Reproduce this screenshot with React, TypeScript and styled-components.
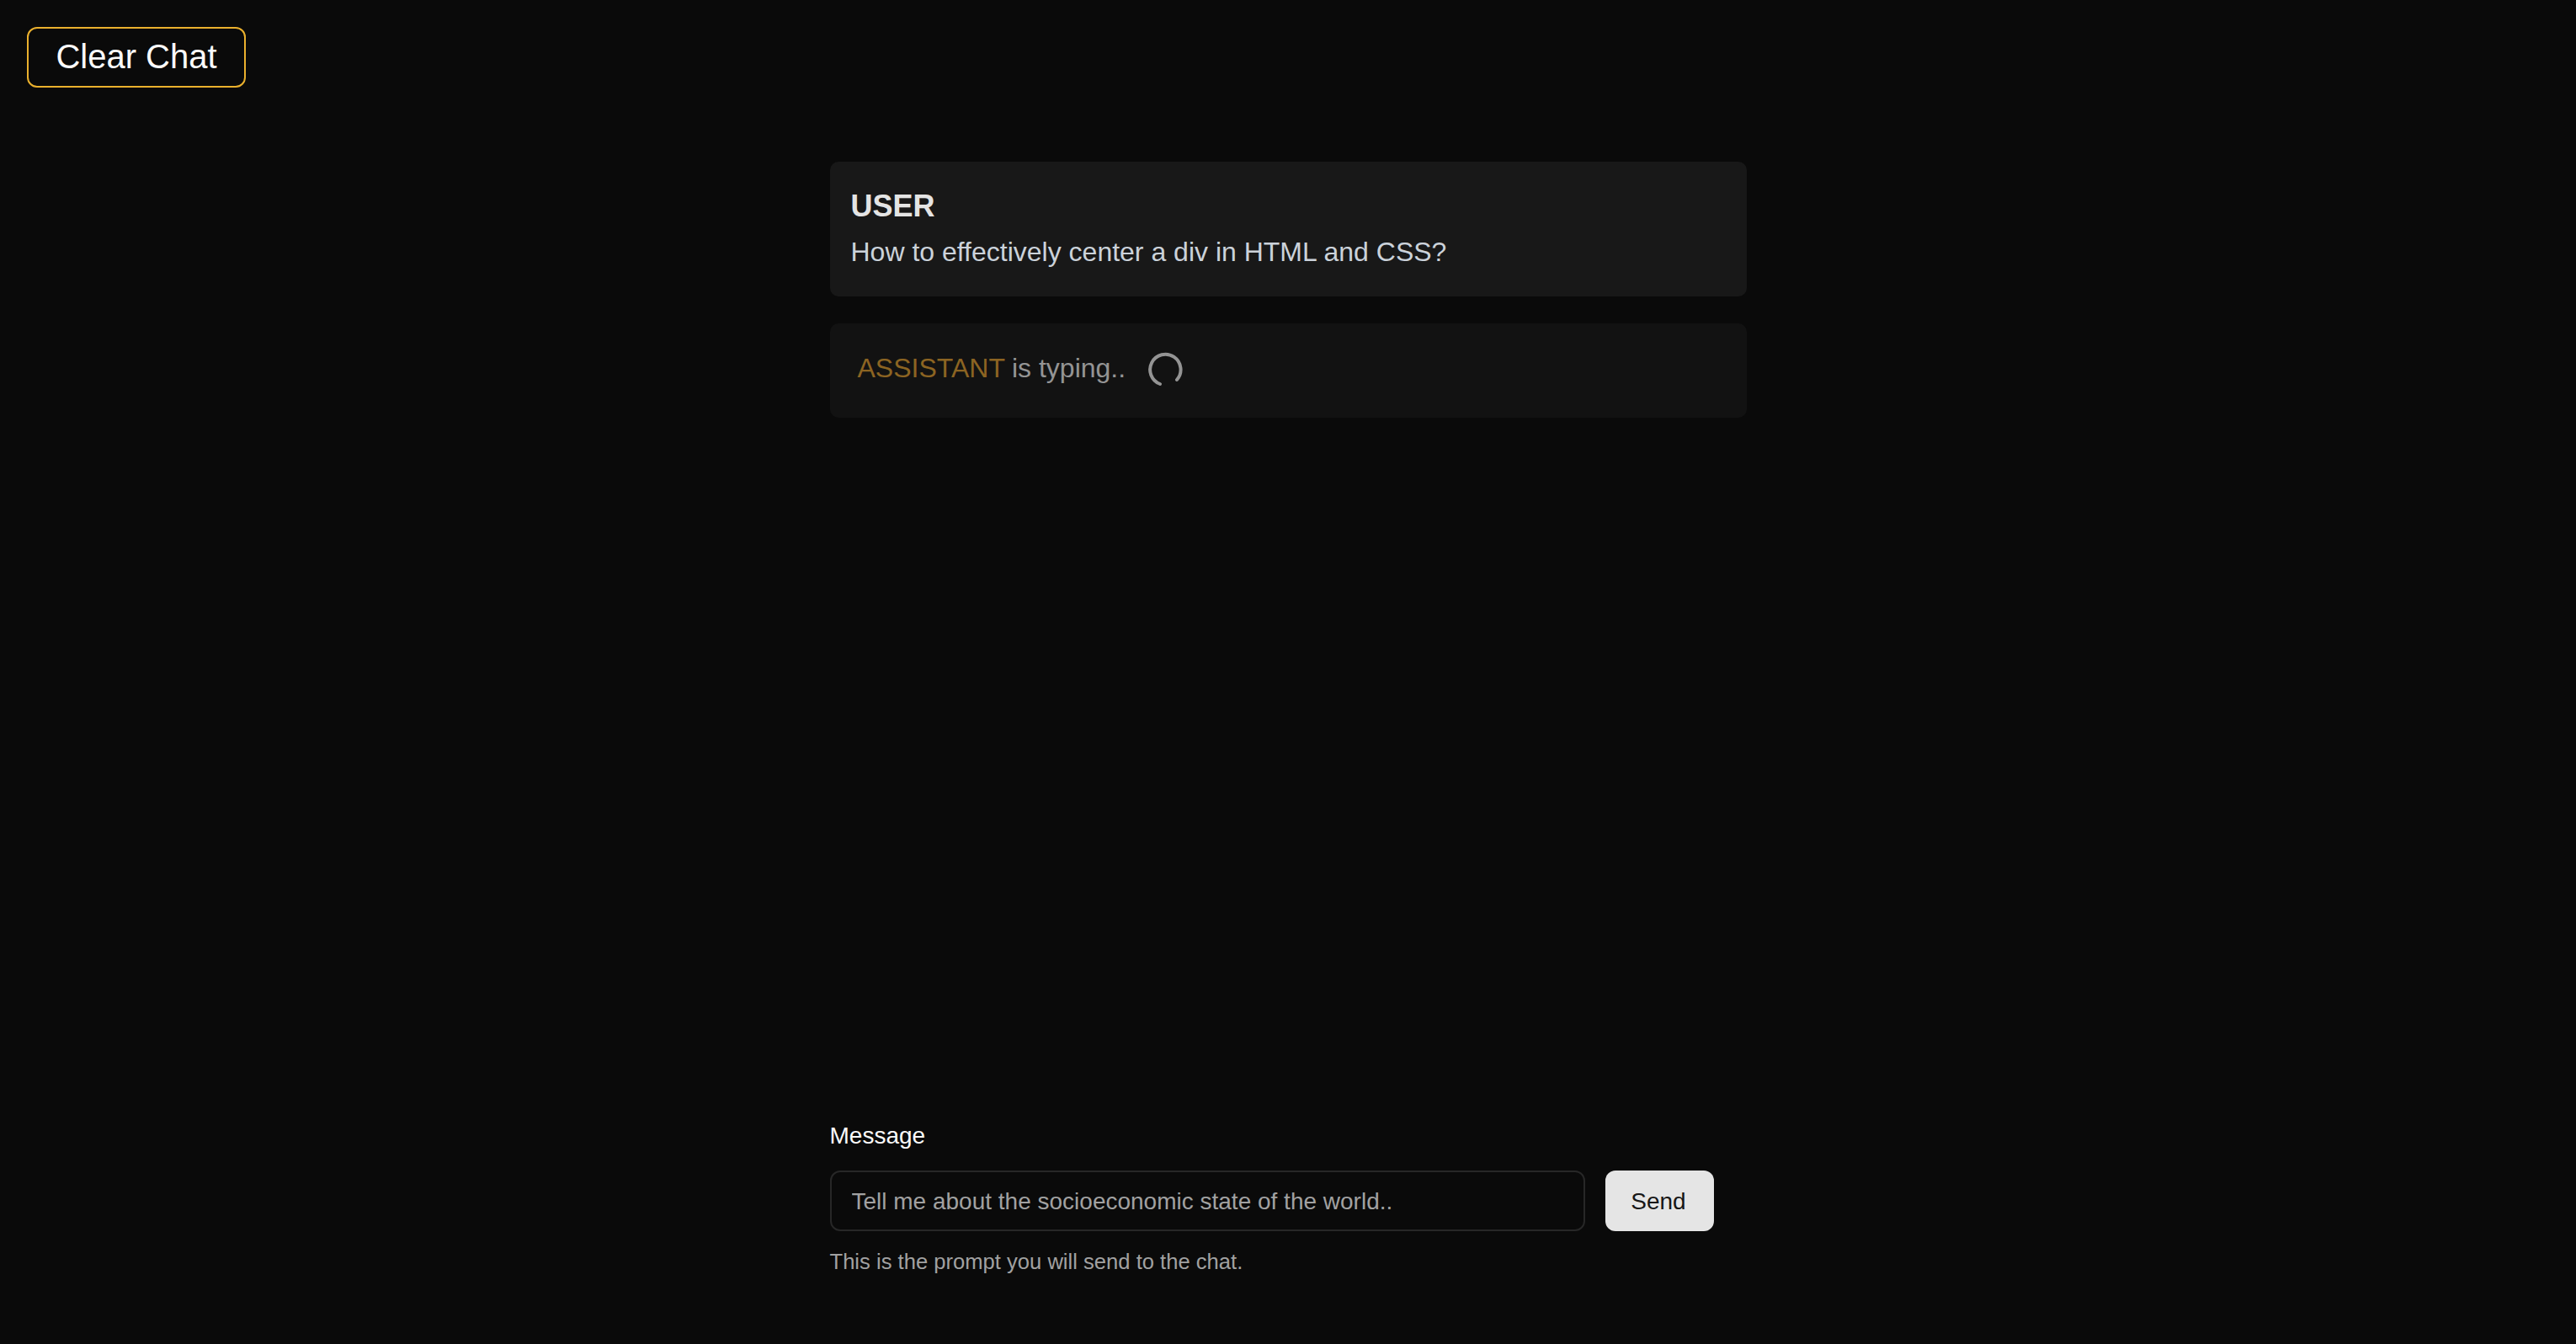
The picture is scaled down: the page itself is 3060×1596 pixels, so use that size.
import { createGlobalStyle, styled } from 'styled-components'

const GlobalStyle = createGlobalStyle`
  html, body {
    margin: 0;
    height: 100%;
    background: #0a0a0a;
    font-family: 'Liberation Sans', Arial, sans-serif;
  }
`

const Page = styled.div`
  height: 1596px;
  box-sizing: border-box;
  padding: 32px 0 0;
  display: flex;
  flex-direction: column;
  overflow: hidden;
`

const Toolbar = styled.div`
  padding-left: 32px;
  display: flex;
`

const ClearButton = styled.button`
  width: 260px;
  height: 72px;
  padding: 0 0 2px;
  border: 2px solid #eab02d;
  border-radius: 12px;
  background: transparent;
  color: #fafafa;
  font: 400 40px 'Liberation Sans', Arial, sans-serif;
`

const Column = styled.main`
  width: 1089px;
  margin: 88px auto 0;
  flex: 1;
  display: flex;
  flex-direction: column;
`

const MessageCard = styled.div`
  height: 160px;
  box-sizing: border-box;
  padding: 30px 25px 0;
  background: #181818;
  border-radius: 10px;
`

const Role = styled.div`
  color: #e4e4e4;
  font-size: 36px;
  font-weight: 700;
  line-height: 46px;
`

const MessageText = styled.div`
  color: #cbd2da;
  font-size: 32px;
  line-height: 46px;
  margin-top: 8px;
`

const TypingCard = styled.div`
  height: 112px;
  box-sizing: border-box;
  margin-top: 32px;
  padding: 0 33px 5px;
  background: #121212;
  border-radius: 10px;
  display: flex;
  align-items: center;
  color: #949494;
  font-size: 32px;
`

const AssistantName = styled.span`
  color: #8c6422;
  margin-right: 8px;
`

const Spinner = styled.svg`
  width: 42px;
  height: 42px;
  margin-left: 26px;
  margin-top: 3px;
`

const Composer = styled.form`
  margin-top: auto;
  margin-bottom: 82px;
`

const Label = styled.label`
  display: block;
  color: #fafafa;
  font-size: 28px;
  line-height: 32px;
  padding-top: 1px;
`

const InputRow = styled.div`
  width: 1050px;
  margin-top: 25px;
  display: flex;
  gap: 24px;
`

const PromptInput = styled.input`
  flex: 1;
  height: 72px;
  box-sizing: border-box;
  padding: 2px 24px 0;
  border: 2px solid #272727;
  border-radius: 12px;
  background: transparent;
  color: #fafafa;
  font: 400 28px 'Liberation Sans', Arial, sans-serif;

  &::placeholder {
    color: #a1a1a1;
    opacity: 1;
  }
`

const SendButton = styled.button`
  width: 129px;
  height: 72px;
  padding: 2px 2px 0 0;
  border: 0;
  border-radius: 12px;
  background: #e5e5e5;
  color: #171717;
  font: 400 28px 'Liberation Sans', Arial, sans-serif;
`

const Hint = styled.p`
  margin: 20px 0 0;
  color: #a1a1a1;
  font-size: 25.6px;
  line-height: 32px;
`

export default function App() {
  return (
    <Page>
      <GlobalStyle />
      <Toolbar>
        <ClearButton type='button'>Clear Chat</ClearButton>
      </Toolbar>
      <Column>
        <MessageCard>
          <Role>USER</Role>
          <MessageText>How to effectively center a div in HTML and CSS?</MessageText>
        </MessageCard>
        <TypingCard>
          <AssistantName>ASSISTANT</AssistantName>
          is typing..
          <Spinner viewBox='0 0 42 42' fill='none'>
            <path
              d='M15 38 A18.2 18.2 0 1 1 35 33'
              stroke='#949494'
              strokeWidth='4'
              strokeLinecap='round'
            />
          </Spinner>
        </TypingCard>
        <Composer>
          <Label htmlFor='prompt'>Message</Label>
          <InputRow>
            <PromptInput id='prompt' placeholder='Tell me about the socioeconomic state of the world..' />
            <SendButton type='button'>Send</SendButton>
          </InputRow>
          <Hint>This is the prompt you will send to the chat.</Hint>
        </Composer>
      </Column>
    </Page>
  )
}
